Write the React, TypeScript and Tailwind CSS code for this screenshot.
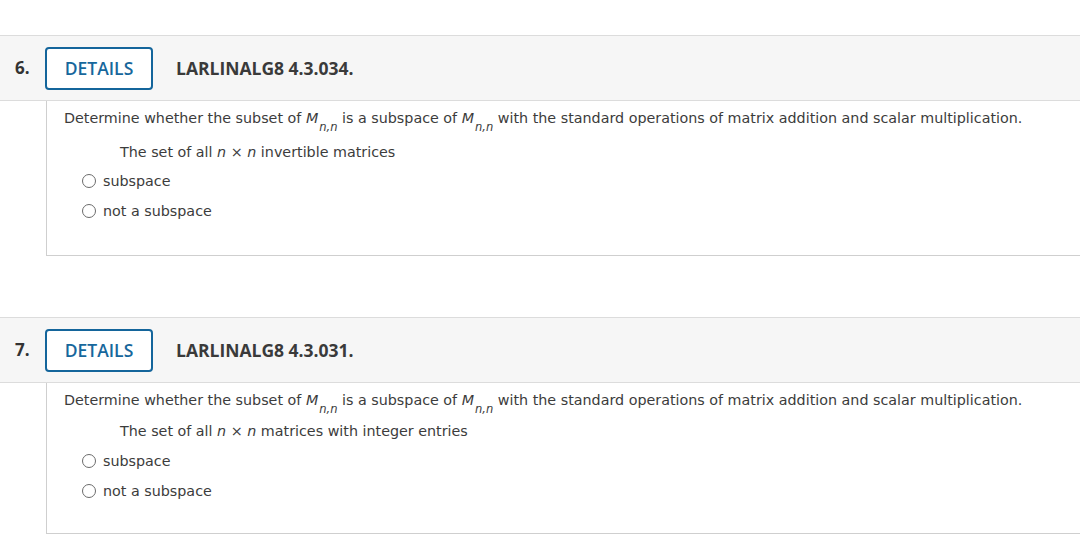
import React from "react";

type Question = {
  num: string;
  code: string;
  setText: React.ReactNode;
  gapSet: string;
  gapRadio: string;
  boxBottom: string;
};

function Mnn() {
  return (
    <span className="whitespace-nowrap">
      <i>M</i>
      <sub className="relative top-[8px] text-[11.5px] italic ml-[1px]">n,n</sub>
    </span>
  );
}

function Radio({ label }: { label: string }) {
  return (
    <label className="flex items-center h-[30px] pl-[18px] cursor-pointer">
      <span className="w-[14px] h-[14px] rounded-full border border-[#6b6b6b] bg-white inline-block" />
      <span className="ml-[7px]">{label}</span>
    </label>
  );
}

const questions: Question[] = [
  {
    num: "6.",
    code: "LARLINALG8 4.3.034.",
    setText: (
      <>
        The set of all <i>n</i> × <i>n</i> invertible matrices
      </>
    ),
    gapSet: "mt-[16px]",
    gapRadio: "mt-[5px]",
    boxBottom: "pb-[29px]",
  },
  {
    num: "7.",
    code: "LARLINALG8 4.3.031.",
    setText: (
      <>
        The set of all <i>n</i> × <i>n</i> matrices with integer entries
      </>
    ),
    gapSet: "mt-[13px]",
    gapRadio: "mt-[6px]",
    boxBottom: "pb-[27px]",
  },
];

export default function App() {
  return (
    <div className="min-h-screen bg-white pt-[35px] text-[#333]">
      {questions.map((q, i) => (
        <div key={q.num} className={i > 0 ? "mt-[61px]" : ""}>
          {/* Header */}
          <div className="flex items-center h-[66px] bg-[#f6f6f6] border-y border-[#dcdcdc] pl-[15px] font-['Open_Sans',sans-serif]">
            <span className="w-[30px] text-[17px] font-bold text-[#333]">{q.num}</span>
            <button className="w-[108px] h-[43px] rounded-[4px] border-2 border-[#14659b] bg-white text-[#17679c] text-[17.5px] font-semibold">
              DETAILS
            </button>
            <span className="ml-[23px] text-[17.5px] font-bold text-[#3a3a3a]">{q.code}</span>
          </div>

          {/* Body */}
          <div className={`ml-[46px] border-l border-b border-[#cfcfcf] pl-[17px] pt-[8px] ${q.boxBottom} font-['DejaVu_Sans',Verdana,sans-serif] text-[14.3px] leading-[18px] text-[#3c3c3c]`}>
            <p>
              Determine whether the subset of <Mnn /> is a subspace of <Mnn /> with the standard operations of matrix addition and scalar multiplication.
            </p>
            <p className={`${q.gapSet} pl-[56px]`}>{q.setText}</p>
            <div className={q.gapRadio}>
              <Radio label="subspace" />
              <Radio label="not a subspace" />
            </div>
          </div>
        </div>
      ))}
    </div>
  );
}
